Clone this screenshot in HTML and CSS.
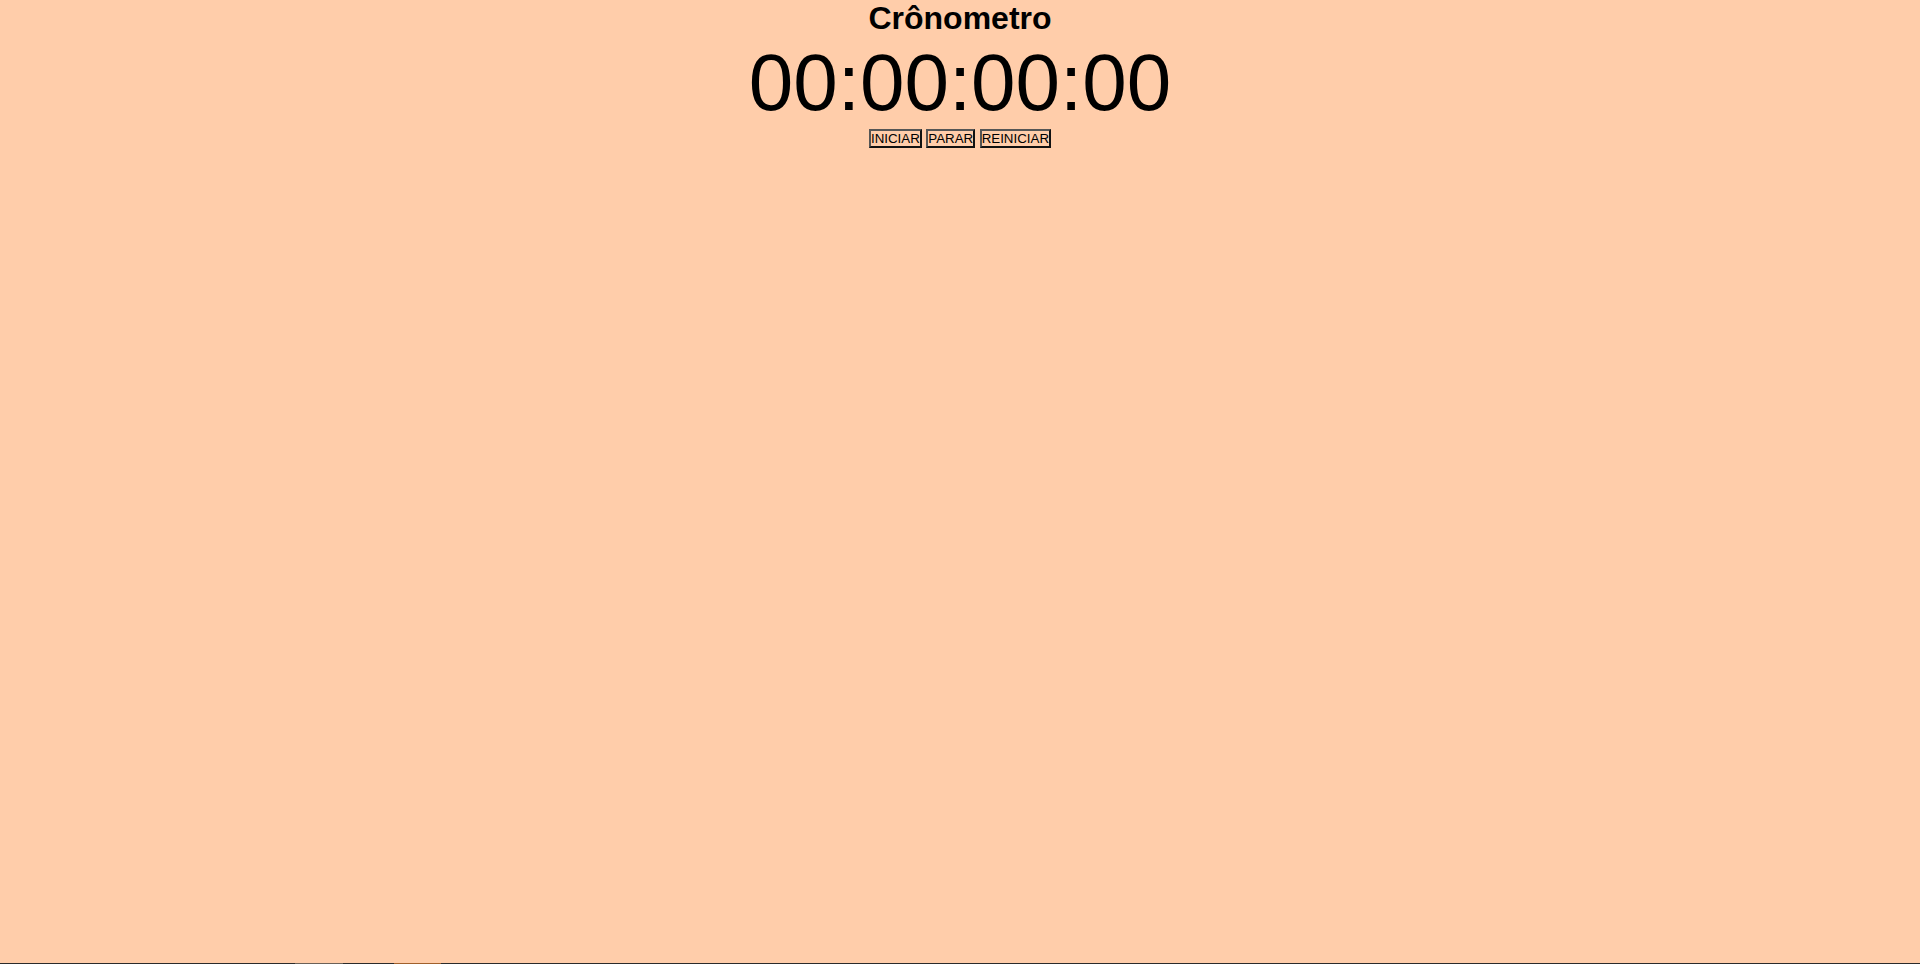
FILE: index.html
```html
<!DOCTYPE html>
<html lang="pt-BR">
<head>
<meta charset="utf-8">
<title>Crônometro</title>
<link rel="stylesheet" href="styles.css">
</head>
<body>
<main class="app">
  <h1 class="title">Crônometro</h1>
  <div class="timer">00:00:00:00</div>
  <div class="controls">
    <button class="btn">INICIAR</button>
    <button class="btn">PARAR</button>
    <button class="btn">REINICIAR</button>
  </div>
</main>
<div class="taskbar">
  <span class="seg seg-a"></span><span class="seg seg-b"></span><span class="seg seg-c"></span><span class="seg seg-d"></span><span class="seg seg-e"></span>
</div>
</body>
</html>
```

FILE: styles.css
```css
html, body {
  margin: 0;
  padding: 0;
  height: 100%;
}
body {
  background: #ffcdaa;
  font-family: "Liberation Sans", Arial, sans-serif;
  color: #000;
}
.app {
  text-align: center;
}
.title {
  margin: 0;
  font-size: 32px;
  font-weight: bold;
  line-height: 37px;
}
.timer {
  font-size: 80px;
  line-height: 92px;
}
.controls {
  line-height: 19px;
}
.btn {
  font-family: "Liberation Sans", Arial, sans-serif;
  font-size: 13.333px;
  background: transparent;
  color: #000;
  padding: 0;
  margin: 0;
  height: 19px;
  border-width: 2px;
  border-style: solid;
  border-color: #555 #111 #111 #555;
  vertical-align: top;
}
.taskbar {
  position: fixed;
  left: 0;
  right: 0;
  bottom: 0;
  height: 1px;
  display: flex;
}
.seg { height: 1px; }
.seg-a { width: 295px; background: #2b2b2b; }
.seg-b { width: 48px; background: #6b6158; }
.seg-c { width: 51px; background: #2b2b2b; }
.seg-d { width: 47px; background: #a0602c; }
.seg-e { flex: 1; background: #2b2b2b; }
```
